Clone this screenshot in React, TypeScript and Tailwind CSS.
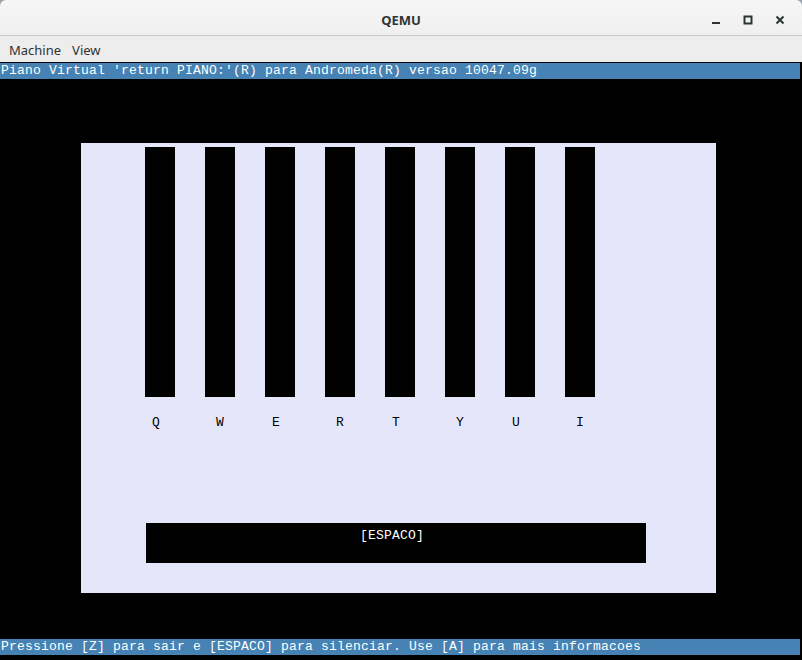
import React from "react";

const mono = { fontFamily: '"Liberation Mono", "DejaVu Sans Mono", monospace' };

const keys = [
  { k: "Q", o: 7 },
  { k: "W", o: 11 },
  { k: "E", o: 7 },
  { k: "R", o: 11 },
  { k: "T", o: 7 },
  { k: "Y", o: 11 },
  { k: "U", o: 7 },
  { k: "I", o: 11 },
];

export default function App() {
  return (
    <div className="w-[802px] h-[660px] bg-[#9aa3ad] flex flex-col overflow-hidden">
      {/* Title bar */}
      <div
        className="h-[36px] shrink-0 rounded-t-[6px] bg-gradient-to-b from-[#f6f6f6] to-[#f0f0f0] border-b border-[#c8c8c8] flex items-center relative"
        style={{ fontFamily: '"Noto Sans", "Open Sans", sans-serif' }}
      >
        <div className="flex-1 text-center text-[13px] font-bold text-[#2e3436] pt-[6px]">QEMU</div>
        <div className="absolute right-0 top-0 h-[36px] flex items-center pt-[4px]">
          <div className="w-[32px] flex justify-center">
            <svg width="10" height="10" viewBox="0 0 10 10">
              <rect x="1" y="7" width="8" height="2" fill="#2e3436" />
            </svg>
          </div>
          <div className="w-[32px] flex justify-center">
            <svg width="10" height="10" viewBox="0 0 10 10">
              <rect x="1.5" y="1.5" width="7" height="7" fill="none" stroke="#2e3436" strokeWidth="2" />
            </svg>
          </div>
          <div className="w-[32px] flex justify-center mr-[6px]">
            <svg width="10" height="10" viewBox="0 0 10 10">
              <path d="M1.5 1.5 L8.5 8.5 M8.5 1.5 L1.5 8.5" stroke="#2e3436" strokeWidth="2" />
            </svg>
          </div>
        </div>
      </div>
      {/* Menu bar */}
      <div
        className="h-[26px] shrink-0 bg-[#ededed] flex items-center text-[13px] text-[#2e3436] pl-[9px] pt-[4px] gap-[11px]"
        style={{ fontFamily: '"Noto Sans", "Open Sans", sans-serif' }}
      >
        <span>Machine</span>
        <span>View</span>
      </div>
      {/* Screen */}
      <div className="flex-1 bg-black flex flex-col w-[802px] pt-[1px]" style={mono}>
        <div className="h-[16px] w-[800px] bg-[#4682b4] text-white text-[13px] leading-[16px] tracking-[0.2px] pl-[1px] whitespace-pre">
          Piano Virtual 'return PIANO:'(R) para Andromeda(R) versao 10047.09g
        </div>
        <div className="ml-[81px] mt-[64px] w-[635px] h-[450px] bg-[#e6e6fa] flex flex-col">
          <div className="flex gap-[30px] pl-[64px] pt-[4px]">
            {keys.map((x) => (
              <div key={x.k} className="w-[30px] h-[250px] bg-black" />
            ))}
          </div>
          <div className="flex pl-[64px] mt-[18px] h-[16px]">
            {keys.map((x) => (
              <div key={x.k} className="w-[60px] text-[13px] leading-[16px] text-black" style={{ paddingLeft: x.o }}>
                {x.k}
              </div>
            ))}
          </div>
          <div className="ml-[65px] mt-[92px] w-[500px] h-[40px] bg-black text-white text-[13px] leading-[16px] tracking-[0.2px] pl-[214px] pt-[5px] whitespace-pre">
            [ESPACO]
          </div>
        </div>
        <div className="mt-[46px] h-[16px] w-[800px] bg-[#4682b4] text-white text-[13px] leading-[16px] tracking-[0.2px] pl-[1px] whitespace-pre">
          Pressione [Z] para sair e [ESPACO] para silenciar. Use [A] para mais informacoes
        </div>
      </div>
    </div>
  );
}
